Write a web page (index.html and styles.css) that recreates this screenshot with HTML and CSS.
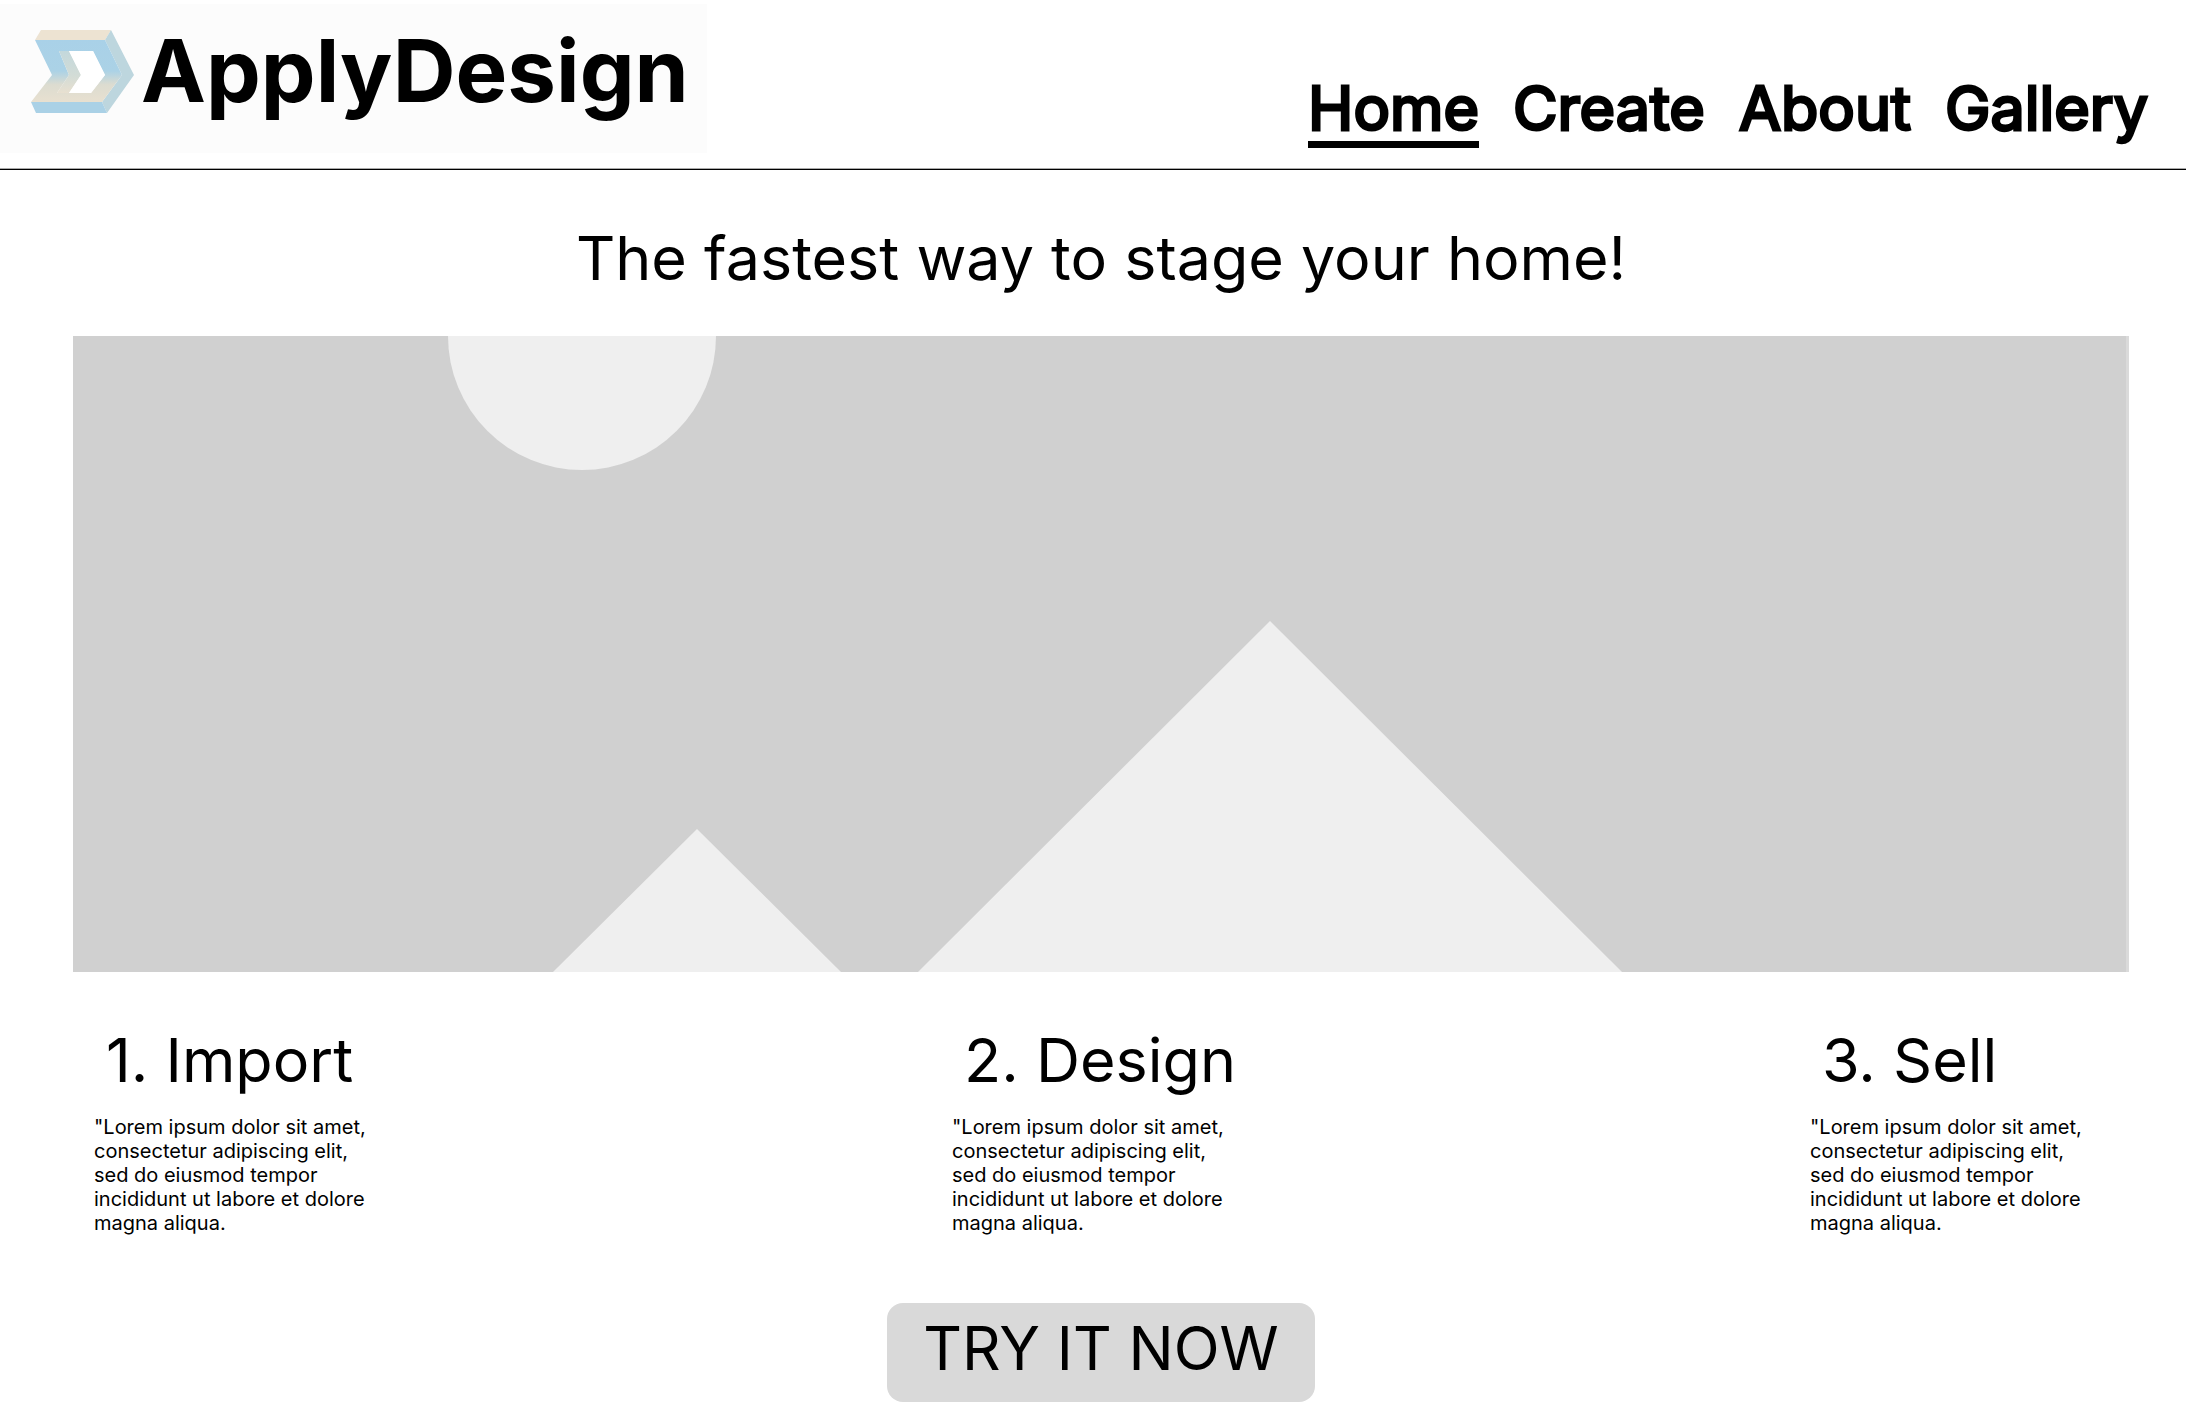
FILE: index.html
```html
<!DOCTYPE html>
<html lang="en">
<head>
<meta charset="utf-8">
<meta name="viewport" content="width=device-width, initial-scale=1">
<title>ApplyDesign</title>
<link rel="stylesheet" href="styles.css">
</head>
<body>
<header class="site-header">
  <a class="brand" href="#">
    <svg class="brand-mark" viewBox="0 0 104 84" aria-hidden="true">
      <defs>
        <linearGradient id="band" x1="0" y1="0" x2="0" y2="1">
          <stop offset="0" stop-color="#a9d1e8"/>
          <stop offset=".5" stop-color="#abd2e6"/>
          <stop offset=".72" stop-color="#dcdcd0"/>
          <stop offset="1" stop-color="#e8e0d0"/>
        </linearGradient>
        <linearGradient id="inner" x1="0" y1="0" x2="0" y2="1">
          <stop offset="0" stop-color="#c3d8dc"/>
          <stop offset=".6" stop-color="#d3dcd6"/>
          <stop offset="1" stop-color="#e8e0d0"/>
        </linearGradient>
      </defs>
      <path fill="#ede3d2" d="M10 0H80L74 10H4Z"/>
      <path fill="#bdd6de" d="M80 0L103 45L76 83L71 72L91 45L74 10Z"/>
      <path fill="#aad1e6" d="M0 72H71L76 83H5Z"/>
      <path fill="url(#band)" fill-rule="evenodd" d="M4 10H74L91 45L71 72H0L21 45ZM28 21L38 45L26 63H60L74 45L62 21Z"/>
      <path fill="url(#inner)" d="M28 21H38L50 45L38 63H26L38 45Z"/>
      <path fill="#fff" d="M38 21H62L74 45L60 63H38L50 45Z"/>
    </svg>
    <span class="brand-name">ApplyDesign</span>
  </a>
  <nav class="site-nav" aria-label="Main">
    <a class="nav-link nav-link-current" href="#" aria-current="page">Home</a>
    <a class="nav-link" href="#create">Create</a>
    <a class="nav-link" href="#about">About</a>
    <a class="nav-link" href="#gallery">Gallery</a>
  </nav>
</header>
<main class="page">
  <h1 class="headline">The fastest way to stage your home!</h1>
  <svg class="hero" viewBox="0 0 2056 636" preserveAspectRatio="xMidYMid slice" role="img" aria-label="Placeholder landscape">
    <rect width="2056" height="636" fill="#d0d0d0"/>
    <g fill="#efefef">
      <circle cx="509" cy="0" r="134"/>
      <path d="M480 636L624 493L768 636Z"/>
      <path d="M845 636L1197 285L1549 636Z"/>
    </g>
    <rect x="2053" width="3" height="636" fill="#dadada"/>
  </svg>
  <section class="steps">
    <article class="step">
      <h2 class="step-title">1. Import</h2>
      <p class="step-text">"Lorem ipsum dolor sit amet, consectetur adipiscing elit, sed do eiusmod tempor incididunt ut labore et dolore magna aliqua.</p>
    </article>
    <article class="step">
      <h2 class="step-title">2. Design</h2>
      <p class="step-text">"Lorem ipsum dolor sit amet, consectetur adipiscing elit, sed do eiusmod tempor incididunt ut labore et dolore magna aliqua.</p>
    </article>
    <article class="step">
      <h2 class="step-title">3. Sell</h2>
      <p class="step-text">"Lorem ipsum dolor sit amet, consectetur adipiscing elit, sed do eiusmod tempor incididunt ut labore et dolore magna aliqua.</p>
    </article>
  </section>
  <button class="cta" type="button">TRY IT NOW</button>
</main>
</body>
</html>
```
FILE: styles.css
```css
* {
  box-sizing: border-box;
}

body {
  margin: 0;
  background: #fff;
  color: #000;
  font-family: Inter, "Liberation Sans", sans-serif;
}

.site-header {
  display: flex;
  justify-content: space-between;
  align-items: flex-end;
  padding: 4px 38px 16px 0;
  border-bottom: 1px solid #000;
  box-shadow: inset 0 -1px #aaa;
}

.brand {
  display: flex;
  align-items: flex-start;
  gap: 6px;
  padding: 16px 18px 32px 31px;
  background: #fcfcfc;
  color: #000;
  text-decoration: none;
}

.brand-mark {
  width: 104px;
  height: 84px;
  margin-top: 10px;
}

.brand-name {
  font-size: 87px;
  font-weight: 700;
  line-height: 101px;
}

.site-nav {
  display: flex;
  gap: 34px;
  padding-bottom: 5px;
}

.nav-link {
  border-bottom: 7px solid transparent;
  color: #000;
  font-size: 61px;
  line-height: 66px;
  text-decoration: none;
  -webkit-text-stroke: 3px #000;
}

.nav-link-current {
  border-bottom-color: #000;
}

.page {
  display: flex;
  flex-direction: column;
  align-items: center;
  padding: 52px 57px 11px 73px;
}

.headline,
.step-title {
  margin: 0;
  font-size: 61px;
  font-weight: 400;
  line-height: 72px;
}

.hero {
  display: block;
  width: 100%;
  margin-top: 42px;
}

.steps {
  display: flex;
  justify-content: space-between;
  align-self: stretch;
  padding: 52px 39px 0 21px;
}

.step {
  width: 280px;
}

.step-title {
  padding-left: 12px;
  white-space: nowrap;
}

.step-text {
  margin: 19px 0 0;
  font-size: 20px;
  line-height: 24px;
}

.cta {
  margin-top: 68px;
  padding: 9px 36px 18px;
  border: 0;
  border-radius: 16px;
  background: #d9d9d9;
  color: #000;
  font: 400 60px/72px Inter, "Liberation Sans", sans-serif;
}
```
